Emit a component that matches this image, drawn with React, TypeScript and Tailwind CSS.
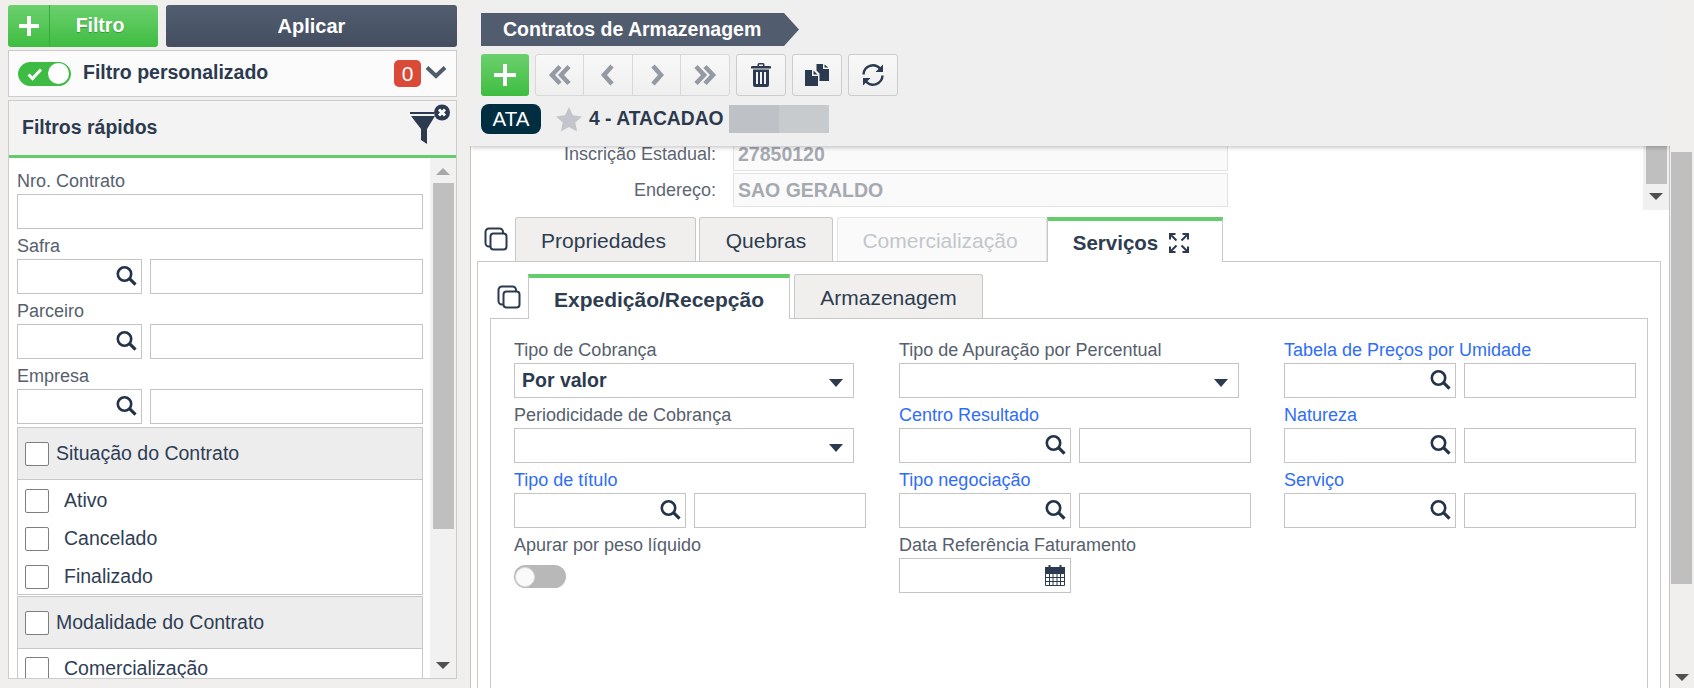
import React from "react";

const DARK = "#2c3a4f";

function Search() {
  return (
    <svg width="21" height="21" viewBox="0 0 21 21" className="absolute right-[4px] top-[6px]">
      <circle cx="8.500" cy="8" r="6.700" fill="none" stroke="#243348" strokeWidth="2.600" />
      <path d="M13.500 12.700l6 6" stroke="#243348" strokeWidth="3.200" />
    </svg>
  );
}

function Caret({ color = "#2c3a4f" }: { color?: string }) {
  return (
    <svg width="14" height="8" viewBox="0 0 14 8" className="absolute right-[10px] top-[15px]">
      <path d="M0 0h14L7 8z" fill={color} />
    </svg>
  );
}

function Label({ text, blue }: { text: string; blue?: boolean }) {
  return (
    <div className={`h-[30px] leading-[34px] text-[18px] whitespace-nowrap ${blue ? "text-[#2f6df6]" : "text-[#56606e]"}`}>
      {text}
    </div>
  );
}

function Box({ className = "", children }: { className?: string; children?: React.ReactNode }) {
  return (
    <div className={`relative h-[35px] border border-[#c4c4c4] bg-white ${className}`}>{children}</div>
  );
}

function Lookup({ w1, w2, gap }: { w1: string; w2: string; gap: string }) {
  return (
    <div className={`flex ${gap}`}>
      <Box className={w1}>
        <Search />
      </Box>
      <Box className={w2} />
    </div>
  );
}

function CopyTabsIcon() {
  return (
    <svg width="24" height="24" viewBox="0 0 24 24" fill="none" stroke="#2c3a4f" strokeWidth="2">
      <path d="M6 19.500H5a3.500 3.500 0 0 1-3.500-3.500V5A3.500 3.500 0 0 1 5 1.500h10.500A3.500 3.500 0 0 1 19 5v1" />
      <rect x="6.500" y="6.500" width="16" height="16" rx="3" />
    </svg>
  );
}

function Check() {
  return <span className="block h-[24px] w-[24px] shrink-0 rounded-[2px] border border-[#7f7f7f] bg-white" />;
}

function CheckRow({ text }: { text: string }) {
  return (
    <div className="flex h-[38px] shrink-0 items-center pl-[7px] text-[19.500px] text-[#2f3e55]">
      <Check />
      <span className="ml-[15px]">{text}</span>
    </div>
  );
}

function GroupHead({ text, h }: { text: string; h: string }) {
  return (
    <div className={`flex items-center border border-[#c8c8c8] bg-[#ededed] pl-[7px] text-[19.500px] text-[#2f3e55] ${h}`}>
      <Check />
      <span className="ml-[7px]">{text}</span>
    </div>
  );
}

function ScrollArrow({ up }: { up?: boolean }) {
  return (
    <svg width="14" height="7" viewBox="0 0 14 7" className="block">
      <path d={up ? "M7 0l7 7H0z" : "M0 0h14L7 7z"} fill={up ? "#a8a8a8" : "#505050"} />
    </svg>
  );
}

function NavBtn({ d, w }: { d: string; w: string }) {
  return (
    <div className={`flex h-full items-center justify-center ${w}`}>
      <svg width="26" height="24" viewBox="0 0 26 24" fill="none" stroke="#939aa3" strokeWidth="4.500">
        <path d={d} />
      </svg>
    </div>
  );
}

function ToolBtn({ children, w = "w-[50px]" }: { children: React.ReactNode; w?: string }) {
  return (
    <div className={`flex h-[42px] items-center justify-center rounded-[3px] border border-[#cccccc] bg-gradient-to-b from-[#f8f8f8] to-[#efefef] ${w}`}>
      {children}
    </div>
  );
}

export default function App() {
  return (
    <div className="flex h-[688px] w-[1694px] overflow-hidden bg-[#f0efee] font-['Liberation_Sans',Arial,sans-serif]">
      {/* Left column */}
      <aside className="flex w-[470px] shrink-0 flex-col pl-[8px] pr-[13px] pt-[5px]">
        <div className="flex h-[42px] gap-[8px]">
          <div className="flex w-[150px] rounded-[3px] bg-gradient-to-b from-[#6bd06d] to-[#3dbd40] text-white">
            <div className="flex w-[42px] items-center justify-center border-r border-[#38ab3b]">
              <svg width="22" height="22" viewBox="0 0 22 22">
                <path d="M9 1h4v8h8v4h-8v8H9v-8H1V9h8z" fill="#fff" />
              </svg>
            </div>
            <div className="flex flex-1 items-center justify-center pr-[8px] text-[19.500px] font-bold [text-shadow:0_1px_1px_rgba(0,0,0,0.25)]">Filtro</div>
          </div>
          <div className="flex flex-1 items-center justify-center rounded-[3px] bg-gradient-to-b from-[#525d70] to-[#444e60] text-[20px] font-bold text-white">
            Aplicar
          </div>
        </div>

        <div className="mt-[3px] flex h-[47px] items-center border border-[#cccccc] bg-[#fbfbfb] pl-[9px] pr-[9px]">
          <div className="flex h-[24px] w-[53px] items-center justify-between rounded-full border border-[#3dbb42] bg-[#3dbb42] pl-[8px] pr-[1px]">
            <svg width="16" height="14" viewBox="0 0 16 14" fill="none" stroke="#fff" strokeWidth="3">
              <path d="M1.500 7.500l4 4L14 2.500" />
            </svg>
            <span className="block h-[21px] w-[21px] rounded-full bg-white" />
          </div>
          <span className="mb-[2px] ml-[12px] text-[19.500px] font-bold text-[#2c3a4f]">Filtro personalizado</span>
          <span className="ml-auto flex h-[27px] w-[27px] items-center justify-center rounded-[5px] bg-[#da4a38] text-[21px] text-white">0</span>
          <svg width="22" height="14" viewBox="0 0 22 14" fill="none" stroke="#505b6c" strokeWidth="4" className="mb-[4px] ml-[4px]">
            <path d="M2 2.500l9 8.500 9-8.500" />
          </svg>
        </div>

        <div className="mt-[3px] flex h-[579px] flex-col border border-[#cccccc] bg-white">
          <div className="flex h-[54px] shrink-0 justify-between bg-[#f3f3f3] pl-[13px] pr-[4px]">
            <span className="self-center text-[19.500px] font-bold text-[#2c3a4f]">Filtros rápidos</span>
            <svg width="42" height="44" viewBox="0 0 42 44">
              <rect x="0" y="11" width="24" height="2" fill={DARK} />
              <path d="M1 15h24l-8 13v15l-6-4V28z" fill={DARK} />
              <circle cx="32" cy="11.500" r="8" fill={DARK} />
              <path d="M29 8.500l6 6m0-6l-6 6" stroke="#fff" strokeWidth="3" />
            </svg>
          </div>
          <div className="h-[3px] shrink-0 bg-[#65cc6b]" />
          <div className="flex min-h-0 flex-1">
            <div className="min-w-0 flex-1 overflow-hidden pl-[8px] pr-[6px]">
              <div className="pt-[6px]">
                <Label text="Nro. Contrato" />
                <Box className="w-[406px]" />
                <Label text="Safra" />
                <Lookup w1="w-[125px]" w2="w-[273px]" gap="gap-[8px]" />
                <Label text="Parceiro" />
                <Lookup w1="w-[125px]" w2="w-[273px]" gap="gap-[8px]" />
                <Label text="Empresa" />
                <Lookup w1="w-[125px]" w2="w-[273px]" gap="gap-[8px]" />
              </div>
              <div className="mt-[3px] w-[406px]">
                <GroupHead text="Situação do Contrato" h="h-[53px]" />
                <div className="flex h-[115px] flex-col overflow-hidden border-x border-b border-[#c8c8c8] pt-[2px]">
                  <CheckRow text="Ativo" />
                  <CheckRow text="Cancelado" />
                  <CheckRow text="Finalizado" />
                </div>
                <GroupHead text="Modalidade do Contrato" h="mt-[1px] h-[53px]" />
                <div className="border-x border-[#c8c8c8] pt-[1px]">
                  <CheckRow text="Comercialização" />
                </div>
              </div>
            </div>
            <div className="flex w-[26px] shrink-0 flex-col items-center bg-[#f1f1f1]">
              <div className="flex h-[25px] items-center justify-center pt-[2px]">
                <ScrollArrow up />
              </div>
              <div className="h-[346px] w-[21px] bg-[#bfbfbf]" />
              <div className="flex flex-1 items-end justify-center pb-[9px]">
                <ScrollArrow />
              </div>
            </div>
          </div>
        </div>
      </aside>

      {/* Main column */}
      <main className="flex w-[1200px] shrink-0 flex-col">
        <header className="relative z-10 h-[146px] shrink-0 bg-[#efefef] pl-[11px] pt-[13px] shadow-[0_3px_4px_-1px_rgba(0,0,0,0.2)] [clip-path:inset(0_0_-10px_0)]">
          <div className="relative flex h-[33px] w-[303px] items-center bg-[#525c6f] pl-[22px] text-[19.500px] font-bold text-white">
            Contratos de Armazenagem
            <svg width="15" height="33" viewBox="0 0 15 33" className="absolute left-[303px] top-0">
              <path d="M0 0l15 16.500L0 33z" fill="#525c6f" />
            </svg>
          </div>
          <div className="mt-[8px] flex h-[42px]">
            <div className="flex w-[48px] items-center justify-center rounded-[3px] bg-gradient-to-b from-[#6bd06d] to-[#3dbd40]">
              <svg width="22" height="22" viewBox="0 0 22 22">
                <path d="M9 0h4v9h9v4h-9v9H9v-9H0V9h9z" fill="#fff" />
              </svg>
            </div>
            <div className="ml-[6px] flex h-full w-[195px] divide-x divide-[#d8d8d8] rounded-[3px] border border-[#d8d8d8] bg-gradient-to-b from-[#f8f8f8] to-[#efefef]">
              <NavBtn w="w-[48px]" d="M13 3.500l-8 8.500 8 8.500M22 3.500l-8 8.500 8 8.500" />
              <NavBtn w="w-[49px]" d="M17 3l-8 9 8 9" />
              <NavBtn w="w-[48px]" d="M9 3l8 9-8 9" />
              <NavBtn w="w-[48px]" d="M4 3.500l8 8.500-8 8.500M13 3.500l8 8.500-8 8.500" />
            </div>
            <div className="ml-[6px] flex gap-[6px]">
              <ToolBtn>
                <svg width="20" height="24" viewBox="0 0 20 24" fill="#2c3a4f">
                  <path d="M6.500 3V1.500A1.500 1.500 0 0 1 8 0h4a1.500 1.500 0 0 1 1.500 1.500V3H19a1 1 0 0 1 1 1v1.500H0V4a1 1 0 0 1 1-1zM8 3h4V1.500H8zM2 6.500h16V22a2 2 0 0 1-2 2H4a2 2 0 0 1-2-2zm3 2.500v12h2V9zm4 0v12h2V9zm4 0v12h2V9z" fillRule="evenodd" />
                </svg>
              </ToolBtn>
              <ToolBtn>
                <svg width="24" height="22" viewBox="0 0 24 22" fill="#2c3a4f">
                  <path d="M0 6h7v6h6v10H0zM8.500 6.500L12.500 10.500H8.500z" />
                  <path d="M11.500 0H18v5h6v12h-9.500V9.500L11.500 6.500zM19.500 0.500L23.500 3.500h-4z" />
                </svg>
              </ToolBtn>
              <ToolBtn>
                <svg width="24" height="24" viewBox="0 0 24 24" fill="none" stroke="#2c3a4f" strokeWidth="2.400">
                  <path d="M2.500 11.500A9.500 9.500 0 0 1 19 5.500" />
                  <path d="M21.500 12.500A9.500 9.500 0 0 1 5 18.500" />
                  <path d="M22 1.500v7.500h-7.500zM2 22.500V15h7.500z" fill="#2c3a4f" stroke="none" />
                </svg>
              </ToolBtn>
            </div>
          </div>
          <div className="mt-[8px] flex h-[30px] items-center">
            <span className="flex h-[30px] w-[60px] items-center justify-center rounded-[8px] bg-[#012d41] text-[20.500px] text-white">ATA</span>
            <svg width="26" height="25" viewBox="0 0 26 25" className="ml-[15px]">
              <path d="M13 0l3.900 8.300 9.100 1.100-6.700 6.200 1.800 9L13 20.100l-8.100 4.500 1.800-9L0 9.400l9.100-1.100z" fill="#c2c5cc" />
            </svg>
            <span className="ml-[7px] text-[19.300px] font-bold text-[#2c3a4f]">4 - ATACADAO</span>
            <div className="ml-[5px] flex h-[28px]">
              <div className="w-[50px] bg-[#bec1c6]" />
              <div className="w-[50px] bg-[#c8cbce]" />
            </div>
          </div>
        </header>

        <div className="flex min-h-0 flex-1 flex-col border-x border-[#c4c4c4] bg-white">
          {/* header fields, scrolled */}
          <div className="flex h-[64px] shrink-0 overflow-hidden">
            <div className="flex min-w-0 flex-1 flex-col justify-end gap-[2px] pb-[3px]">
              {[
                ["Inscrição Estadual:", "27850120"],
                ["Endereço:", "SAO GERALDO"],
              ].map(([k, v]) => (
                <div key={k} className="flex h-[34px] shrink-0">
                  <div className="flex w-[245px] shrink-0 items-center justify-end pt-[1px] text-[18px] text-[#5d6672]">{k}</div>
                  <div className="ml-[17px] flex w-[495px] items-center border border-[#e2e2e2] bg-[#fafafa] pl-[4px] pt-[1px] text-[19.500px] font-bold text-[#a5a9b0]">
                    {v}
                  </div>
                </div>
              ))}
            </div>
            <div className="flex w-[26px] shrink-0 flex-col items-center bg-[#f0f0f0]">
              <div className="h-[38px] w-[21px] bg-[#bfbfbf]" />
              <div className="mt-[9px]">
                <ScrollArrow />
              </div>
            </div>
          </div>

          {/* outer tabs */}
          <div className="flex h-[51px] shrink-0 items-end pl-[13px]">
            <div className="mb-[10px] mr-[7px] w-[24px]">
              <CopyTabsIcon />
            </div>
            <div className="flex h-[44px] w-[181px] items-center justify-center rounded-t-[3px] border border-b-0 border-[#c8c8c8] bg-[#f0efee] pr-[4px] pt-[3px] text-[21px] text-[#2e3d50]">
              Propriedades
            </div>
            <div className="ml-[3px] flex h-[44px] w-[134px] items-center justify-center rounded-t-[3px] border border-b-0 border-[#c8c8c8] bg-[#f0efee] pt-[3px] text-[21px] text-[#2e3d50]">
              Quebras
            </div>
            <div className="ml-[4px] flex h-[44px] w-[210px] items-center justify-center rounded-t-[3px] border border-b-0 border-[#e4e4e4] bg-[#fafafa] pr-[4px] pt-[3px] text-[21px] text-[#c3c6ca]">
              Comercialização
            </div>
            <div className="relative z-10 -mb-[1px] flex h-[45px] w-[176px] items-center justify-center gap-[11px] border-x border-[#c8c8c8] border-t-[4px] border-t-[#65cc6b] bg-white pr-[8px] pt-[3px] text-[20.500px] font-bold text-[#2e3d50]">
              Serviços
              <svg width="20" height="20" viewBox="0 0 20 20" fill="none" stroke="#2c3a4f" strokeWidth="2">
                <path d="M1 6.500V1h5.500M13.500 1H19v5.500M19 13.500V19h-5.500M6.500 19H1v-5.500" />
                <path d="M2 2l5.500 5.500M18 2l-5.500 5.500M18 18l-5.500-5.500M2 18l5.500-5.500" />
              </svg>
            </div>
          </div>

          {/* outer tab body */}
          <div className="ml-[6px] mr-[8px] flex min-h-0 flex-1 flex-col border-x border-t border-[#c8c8c8]">
            <div className="flex h-[56px] shrink-0 items-end pl-[19px]">
              <div className="mb-[9px] mr-[7px] w-[24px]">
                <CopyTabsIcon />
              </div>
              <div className="relative z-10 -mb-[1px] flex h-[45px] w-[262px] items-center justify-center border-x border-[#c8c8c8] border-t-[4px] border-t-[#65cc6b] bg-white pt-[3px] text-[21px] font-bold text-[#2e3d50]">
                Expedição/Recepção
              </div>
              <div className="ml-[4px] flex h-[44px] w-[189px] items-center justify-center rounded-t-[3px] border border-b-0 border-[#c8c8c8] bg-[#f0efee] pt-[3px] text-[21px] text-[#2e3d50]">
                Armazenagem
              </div>
            </div>

            <div className="ml-[12px] mr-[12px] min-h-0 flex-1 border-x border-t border-[#c8c8c8] pl-[23px] pt-[14px]">
              <div className="grid grid-cols-[356px_356px_352px] gap-x-[29px]">
                <div>
                  <Label text="Tipo de Cobrança" />
                  <Box className="w-[340px]">
                    <span className="absolute inset-y-0 left-[7px] flex items-center text-[19.500px] font-bold text-[#2c3a4f]">Por valor</span>
                    <Caret />
                  </Box>
                  <Label text="Periodicidade de Cobrança" />
                  <Box className="w-[340px]">
                    <Caret />
                  </Box>
                  <Label blue text="Tipo de título" />
                  <Lookup w1="w-[172px]" w2="w-[172px]" gap="gap-[8px]" />
                  <Label text="Apurar por peso líquido" />
                  <div className="mt-[7px] flex h-[23px] w-[52px] items-center rounded-full bg-[#b8b8b8] pl-[1px]">
                    <span className="block h-[20px] w-[20px] rounded-full border border-[#dedede] bg-[#fafafa]" />
                  </div>
                </div>
                <div>
                  <Label text="Tipo de Apuração por Percentual" />
                  <Box className="w-[340px]">
                    <Caret />
                  </Box>
                  <Label blue text="Centro Resultado" />
                  <Lookup w1="w-[172px]" w2="w-[172px]" gap="gap-[8px]" />
                  <Label blue text="Tipo negociação" />
                  <Lookup w1="w-[172px]" w2="w-[172px]" gap="gap-[8px]" />
                  <Label text="Data Referência Faturamento" />
                  <Box className="w-[172px]">
                    <svg width="20" height="21" viewBox="0 0 20 21" className="absolute right-[5px] top-[6px]">
                      <path d="M3.500 0h2v2h9V0h2v2H20v6.500H0V2h3.500z" fill="#2c3a4f" />
                      <path d="M0.500 8.500h19v12h-19zM1 12.500h18M1 16.500h18M4.500 9v11M8 9v11M12 9v11M15.500 9v11" fill="none" stroke="#2c3a4f" strokeWidth="1" />
                    </svg>
                  </Box>
                </div>
                <div>
                  <Label blue text="Tabela de Preços por Umidade" />
                  <Lookup w1="w-[172px]" w2="w-[172px]" gap="gap-[8px]" />
                  <Label blue text="Natureza" />
                  <Lookup w1="w-[172px]" w2="w-[172px]" gap="gap-[8px]" />
                  <Label blue text="Serviço" />
                  <Lookup w1="w-[172px]" w2="w-[172px]" gap="gap-[8px]" />
                </div>
              </div>
            </div>
          </div>
        </div>
      </main>

      {/* Page scrollbar */}
      <div className="flex w-[24px] shrink-0 flex-col pl-[1px] pr-[2px] pt-[152px]">
        <div className="h-[432px] w-[21px] bg-[#bfbfbf]" />
        <div className="flex flex-1 items-end justify-center pb-[7px]">
          <ScrollArrow />
        </div>
      </div>
    </div>
  );
}
